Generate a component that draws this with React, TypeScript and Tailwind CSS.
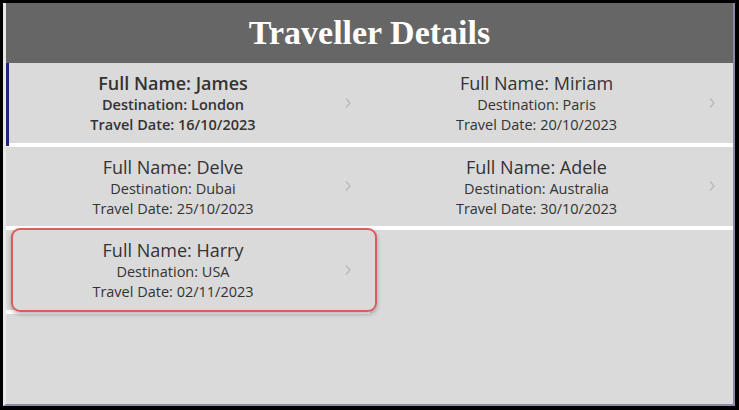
import React from 'react';

type Traveller = { name: string; destination: string; date: string };

const travellers: Traveller[] = [
  { name: 'James', destination: 'London', date: '16/10/2023' },
  { name: 'Miriam', destination: 'Paris', date: '20/10/2023' },
  { name: 'Delve', destination: 'Dubai', date: '25/10/2023' },
  { name: 'Adele', destination: 'Australia', date: '30/10/2023' },
  { name: 'Harry', destination: 'USA', date: '02/11/2023' },
];

const Chevron: React.FC = () => (
  <svg width="8" height="12" viewBox="0 0 8 12" fill="none">
    <polyline points="2,1.5 6,6 2,10.5" stroke="#b8b8b8" strokeWidth="1.3" />
  </svg>
);

const TravellerItem: React.FC<{ t: Traveller; selected?: boolean; highlighted?: boolean }> = ({ t, selected, highlighted }) => (
  <div className="relative h-[83.5px] border-b-4 border-white bg-[#dadada]">
    {selected && <div className="absolute left-0 top-0 h-[83px] w-[3px] bg-[#1c2378]" />}
    <div className="flex h-full items-center">
      <div className={`flex w-[334px] flex-col items-center pt-[1px] text-[#333] ${selected ? 'font-semibold' : ''}`}>
        <div className="text-[18px] leading-[24px]">Full Name: {t.name}</div>
        <div className="text-[14.5px] leading-[20px]">Destination: {t.destination}</div>
        <div className="text-[14.5px] leading-[20px]">Travel Date: {t.date}</div>
      </div>
      <div className="ml-[4px] flex items-center">
        <Chevron />
      </div>
    </div>
    {highlighted && (
      <div className="absolute left-[5px] top-[-2px] h-[84px] w-[366px] rounded-[9px] border-2 border-[#de5b5b] shadow-[0_2px_4px_rgba(0,0,0,0.3)]" />
    )}
  </div>
);

const App: React.FC = () => {
  return (
    <div className="h-[410px] w-[739px] bg-black pb-[4px] pl-[3px] pr-[4px] pt-[3px]" style={{ fontFamily: '"Open Sans", sans-serif' }}>
      <div className="flex h-full flex-col border-b-2 border-l-[3px] border-r-2 border-b-[#8a8aa8] border-l-[#e8e8e8] border-r-[#8a8aa8] bg-[#dadada]">
        <div className="flex h-[60px] items-center justify-center bg-[#666666]">
          <h1 className="text-[34px] font-bold leading-none text-white" style={{ fontFamily: '"Liberation Serif", serif' }}>
            Traveller Details
          </h1>
        </div>
        <div className="grid grid-cols-2">
          {travellers.map((t, i) => (
            <TravellerItem key={t.name} t={t} selected={i === 0} highlighted={i === 4} />
          ))}
        </div>
      </div>
    </div>
  );
};

export default App;
